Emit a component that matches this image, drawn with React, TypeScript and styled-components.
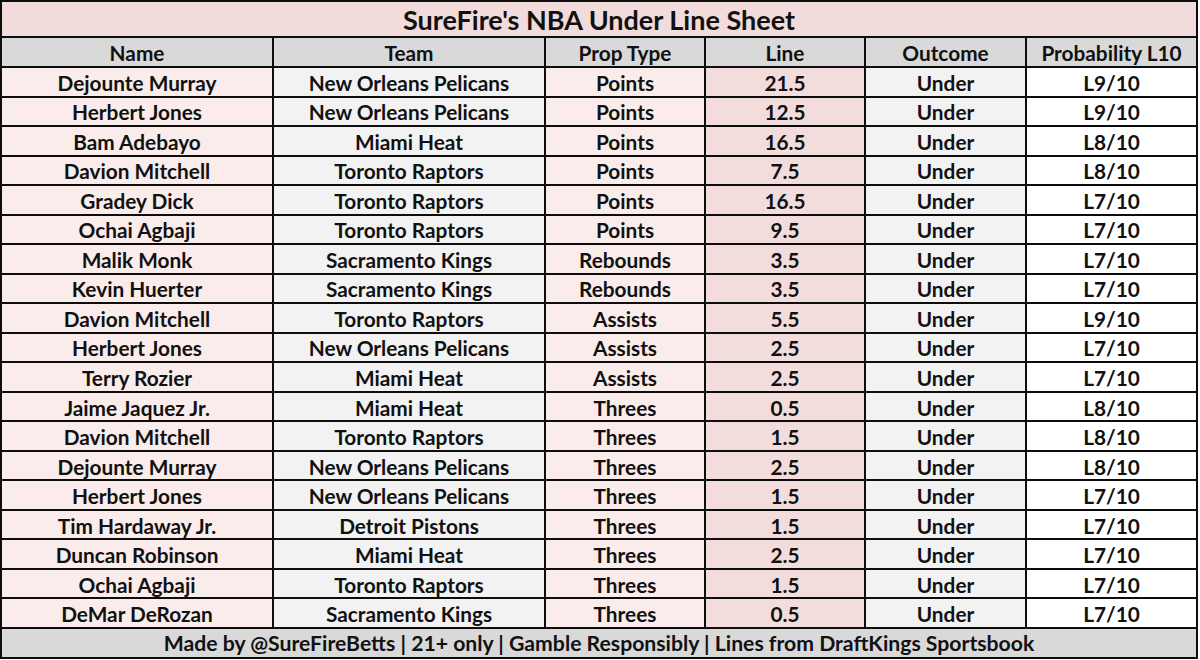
import React from "react";
import styled, { createGlobalStyle } from "styled-components";

const Global = createGlobalStyle`
  html, body { margin: 0; padding: 0; background: #ffffff; }
  body { font-family: Lato, "Open Sans", sans-serif; }
`;

const Sheet = styled.div`
  width: 1198px;
  height: 659px;
  box-sizing: border-box;
  display: grid;
  grid-template-columns: 270px 270px 158px 158px 159px 169px;
  grid-template-rows: 34px 28px repeat(19, 1fr) 28px;
  gap: 2px;
  padding: 2px;
  background: #0d0d0d;
  font-family: Lato, "Open Sans", sans-serif;
  font-weight: 700;
  color: #111111;
`;

const Title = styled.div`
  grid-column: 1 / -1;
  background: #f2dcdb;
  display: flex;
  align-items: center;
  justify-content: center;
  font-size: 27px;
`;

const Footer = styled.div`
  grid-column: 1 / -1;
  background: #d9d9d9;
  display: flex;
  align-items: center;
  justify-content: center;
  font-size: 21.2px;
  padding-top: 1px;
`;

const Cell = styled.div<{ $bg: string }>`
  background: ${(p) => p.$bg};
  display: flex;
  align-items: center;
  justify-content: center;
  font-size: 20.8px;
  white-space: nowrap;
  padding-top: 1px;
`;

const colBg = ["#f9ecea", "#f2f2f2", "#f9ecea", "#f3dcdc", "#f2f2f2", "#ffffff"];

const headers = ["Name", "Team", "Prop Type", "Line", "Outcome", "Probability L10"];

const rows: string[][] = [
  ["Dejounte Murray", "New Orleans Pelicans", "Points", "21.5", "Under", "L9/10"],
  ["Herbert Jones", "New Orleans Pelicans", "Points", "12.5", "Under", "L9/10"],
  ["Bam Adebayo", "Miami Heat", "Points", "16.5", "Under", "L8/10"],
  ["Davion Mitchell", "Toronto Raptors", "Points", "7.5", "Under", "L8/10"],
  ["Gradey Dick", "Toronto Raptors", "Points", "16.5", "Under", "L7/10"],
  ["Ochai Agbaji", "Toronto Raptors", "Points", "9.5", "Under", "L7/10"],
  ["Malik Monk", "Sacramento Kings", "Rebounds", "3.5", "Under", "L7/10"],
  ["Kevin Huerter", "Sacramento Kings", "Rebounds", "3.5", "Under", "L7/10"],
  ["Davion Mitchell", "Toronto Raptors", "Assists", "5.5", "Under", "L9/10"],
  ["Herbert Jones", "New Orleans Pelicans", "Assists", "2.5", "Under", "L7/10"],
  ["Terry Rozier", "Miami Heat", "Assists", "2.5", "Under", "L7/10"],
  ["Jaime Jaquez Jr.", "Miami Heat", "Threes", "0.5", "Under", "L8/10"],
  ["Davion Mitchell", "Toronto Raptors", "Threes", "1.5", "Under", "L8/10"],
  ["Dejounte Murray", "New Orleans Pelicans", "Threes", "2.5", "Under", "L8/10"],
  ["Herbert Jones", "New Orleans Pelicans", "Threes", "1.5", "Under", "L7/10"],
  ["Tim Hardaway Jr.", "Detroit Pistons", "Threes", "1.5", "Under", "L7/10"],
  ["Duncan Robinson", "Miami Heat", "Threes", "2.5", "Under", "L7/10"],
  ["Ochai Agbaji", "Toronto Raptors", "Threes", "1.5", "Under", "L7/10"],
  ["DeMar DeRozan", "Sacramento Kings", "Threes", "0.5", "Under", "L7/10"],
];

export default function App() {
  return (
    <>
      <Global />
      <Sheet>
        <Title>SureFire's NBA Under Line Sheet</Title>
        {headers.map((h) => (
          <Cell key={h} $bg="#d9d9d9">
            {h}
          </Cell>
        ))}
        {rows.map((r, i) =>
          r.map((v, j) => (
            <Cell key={`${i}-${j}`} $bg={colBg[j]}>
              {v}
            </Cell>
          ))
        )}
        <Footer>
          Made by @SureFireBetts | 21+ only | Gamble Responsibly | Lines from DraftKings Sportsbook
        </Footer>
      </Sheet>
    </>
  );
}
